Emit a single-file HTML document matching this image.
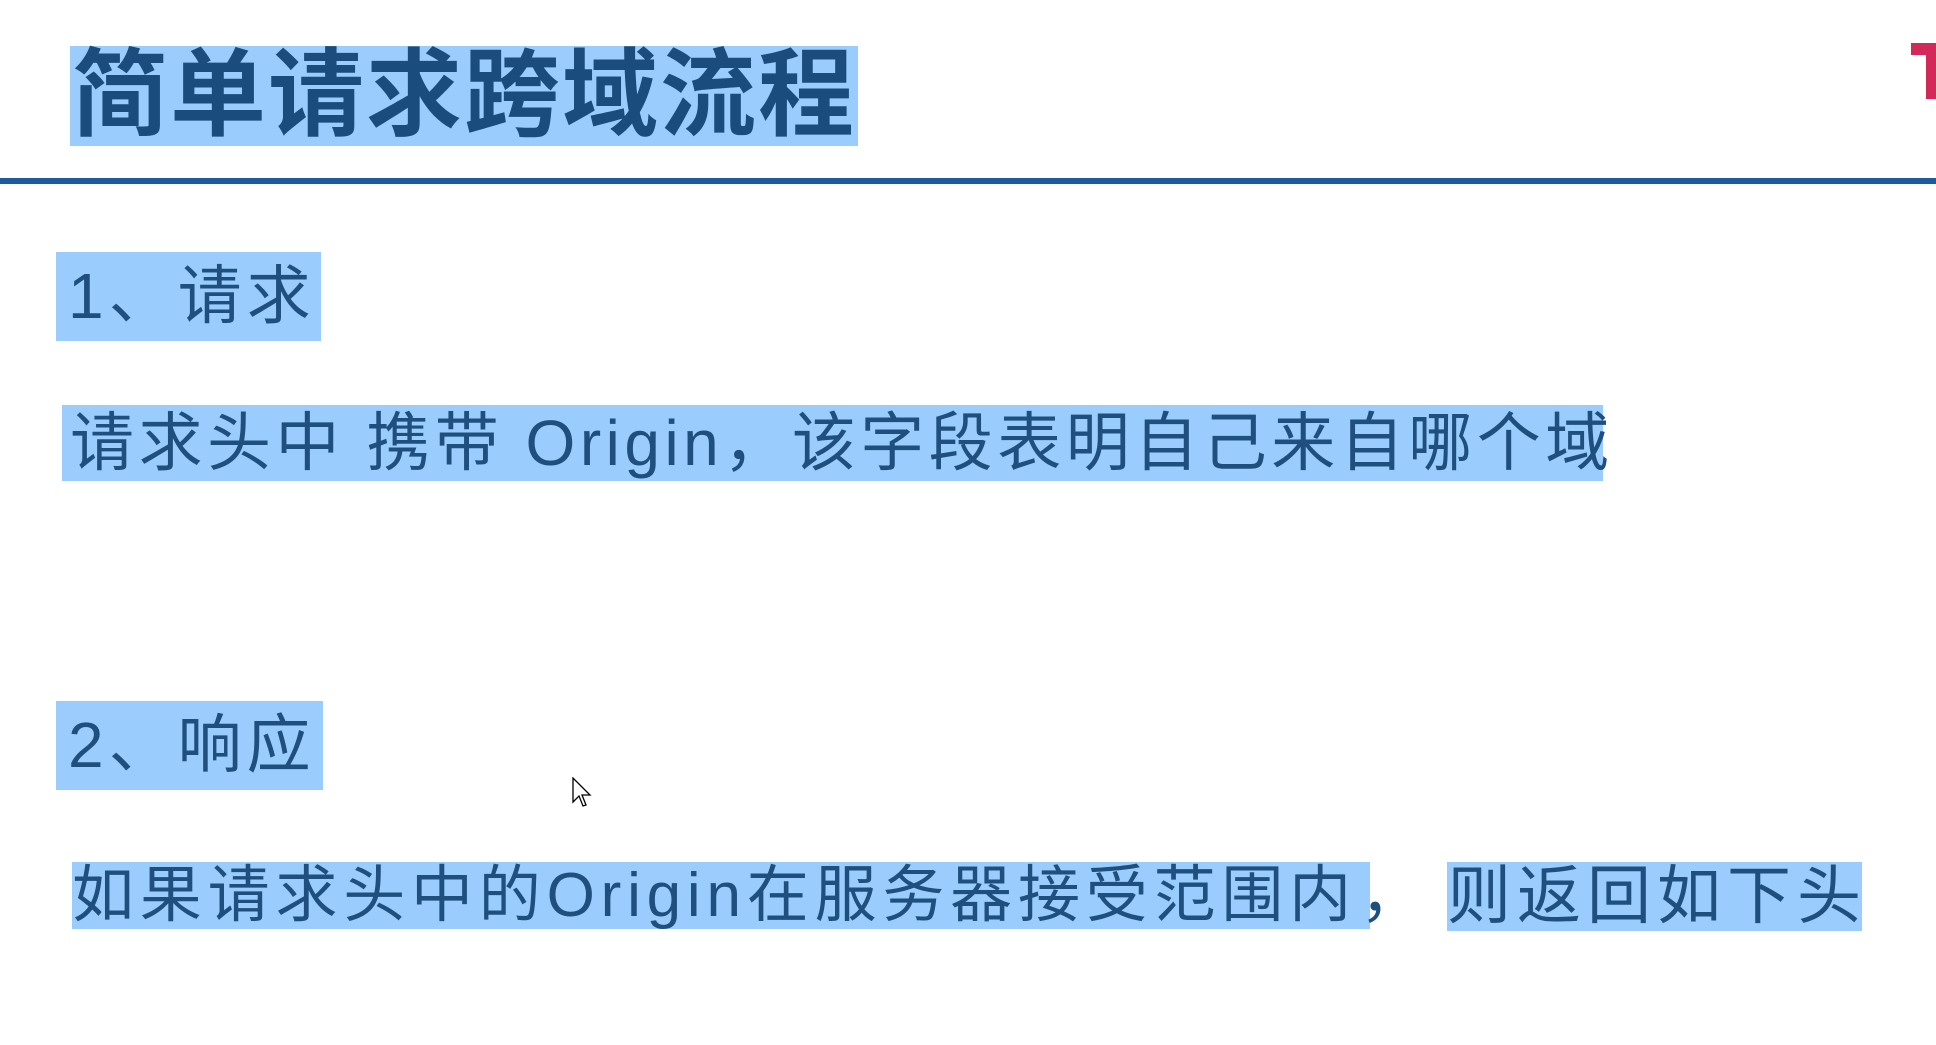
<!DOCTYPE html>
<html><head><meta charset="utf-8"><style>
html,body{margin:0;padding:0;background:#fff;width:1936px;height:1045px;overflow:hidden;position:relative;font-family:"Liberation Sans","Noto Sans CJK SC",sans-serif;color:#1f4f7e}
.h{position:absolute;background:#9accfd;white-space:nowrap;line-height:1}
.t{left:70px;top:46px;width:788px;height:100px;font-weight:bold;font-size:96px;color:#1a4c7e;padding-left:2px;box-sizing:border-box;line-height:100px;letter-spacing:2px}
.rule{position:absolute;left:0;top:178px;width:1936px;height:6px;background:#1c5c98}
</style></head><body>
<div class="h t">简单请求跨域流程</div>
<div class="rule"></div>
<div class="h" style="left:56px;top:252px;width:265px;height:89px;font-size:64px;line-height:89px;padding-left:12px;box-sizing:border-box;letter-spacing:5px">1、请求</div>
<div class="h" style="left:62px;top:405px;width:1541px;height:76px;font-size:64px;line-height:76px;padding-left:8px;box-sizing:border-box;letter-spacing:4.5px">请求头中 携带 Origin，该字段表明自己来自哪个域</div>
<div class="h" style="left:56px;top:701px;width:267px;height:89px;font-size:64px;line-height:89px;padding-left:12px;box-sizing:border-box;letter-spacing:5px">2、响应</div>
<div class="h" style="left:72px;top:862px;width:1298px;height:67px;font-size:62px;line-height:67px;letter-spacing:5.8px">如果请求头中的Origin在服务器接受范围内</div>
<div style="position:absolute;left:1360px;top:862px;font-size:62px;line-height:67px">，</div>
<div class="h" style="left:1447px;top:862px;width:415px;height:69px;font-size:64px;line-height:69px;letter-spacing:6px">则返回如下头</div>
<svg style="position:absolute;left:572px;top:777px" width="22" height="34" viewBox="0 0 22 34"><path d="M1 1 L1 25 L7 19 L11 29 L14 28 L10 18 L18 18 Z" fill="#fff" stroke="#000" stroke-width="1.3"/></svg>
<div style="position:absolute;left:1911px;top:43px;width:25px;height:12px;background:#d2285a"></div>
<div style="position:absolute;left:1926px;top:50px;width:10px;height:49px;background:#d2285a"></div>
</body></html>
